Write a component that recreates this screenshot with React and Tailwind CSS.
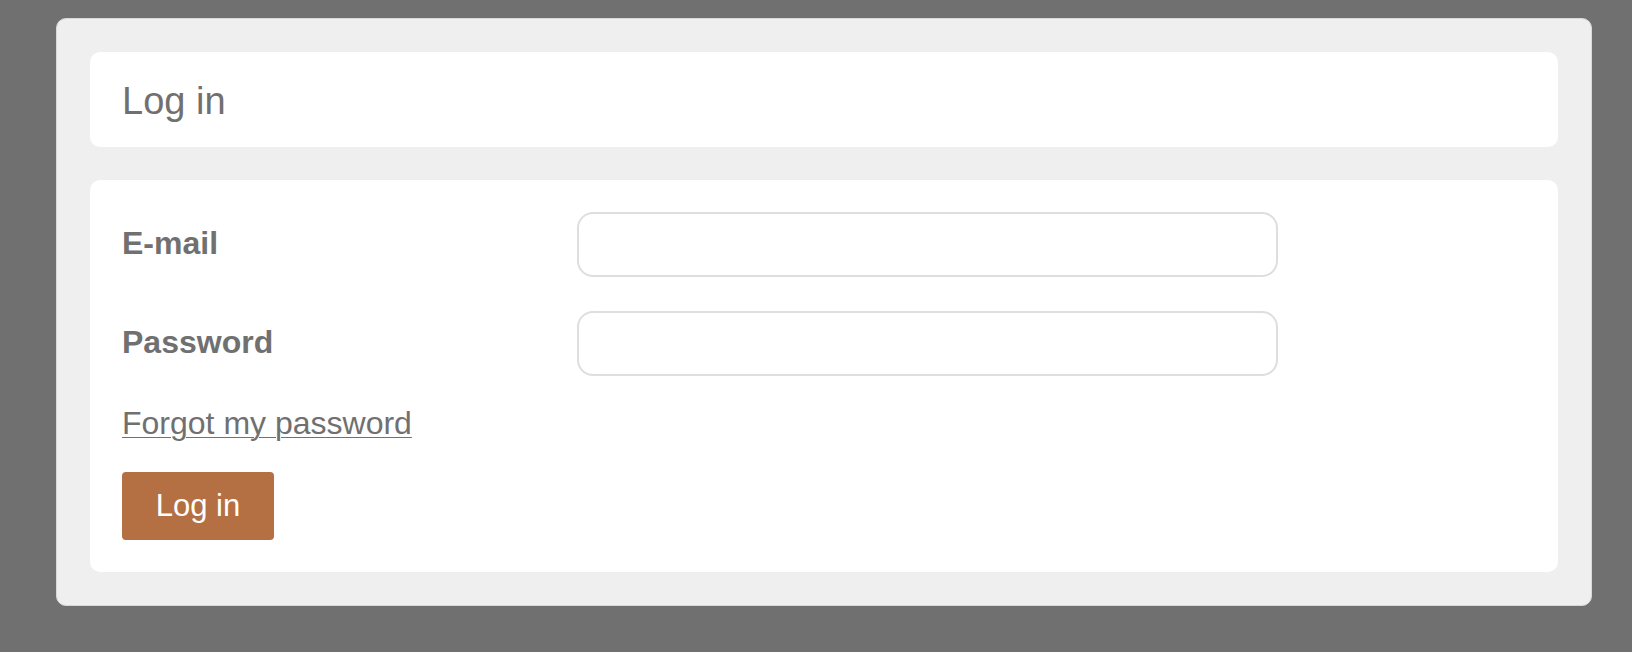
export default function App() {
  return (
    <div className="min-h-[652px] bg-[#707070] pt-[18px] font-['Liberation_Sans',Arial,sans-serif] text-[#707070]">
      <div className="ml-[56px] w-[1536px] rounded-[10px] border border-[#d8d8d8] bg-[#efefef] p-[33px]">
        {/* Title */}
        <div className="flex h-[95px] items-center rounded-[10px] bg-white px-[32px]">
          <h1 className="mt-[2px] text-[38px] leading-none">Log in</h1>
        </div>

        {/* Form */}
        <form className="mt-[33px] rounded-[10px] bg-white px-[32px] pt-[32px] pb-[32px]">
          <div className="flex items-center">
            <label className="mb-[3px] w-[455px] text-[32px] font-bold">E-mail</label>
            <input
              type="email"
              className="h-[65px] w-[701px] rounded-[16px] border-2 border-[#dedede] bg-white px-4 outline-none"
            />
          </div>
          <div className="mt-[34px] flex items-center">
            <label className="mb-[3px] w-[455px] text-[32px] font-bold">Password</label>
            <input
              type="password"
              className="h-[65px] w-[701px] rounded-[16px] border-2 border-[#dedede] bg-white px-4 outline-none"
            />
          </div>
          <div className="mt-[29px] text-[32px] leading-[36px]">
            <a href="#" className="underline underline-offset-[3px] decoration-1">
              Forgot my password
            </a>
          </div>
          <button
            type="button"
            className="mt-[31px] flex h-[68px] w-[152px] items-center justify-center rounded-[4px] bg-[#b46f42] text-[31px] text-white"
          >
            Log in
          </button>
        </form>
      </div>
    </div>
  );
}
